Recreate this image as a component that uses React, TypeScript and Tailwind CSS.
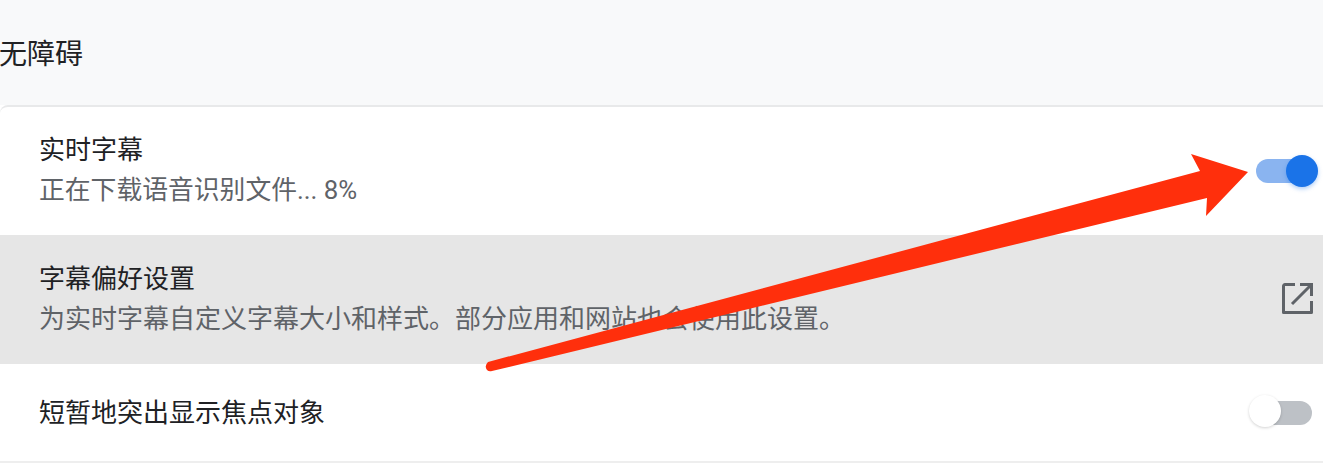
const font = "font-['Roboto','Noto_Sans_CJK_SC',sans-serif]";

function Row({ title, subtitle, subClass, className, children }: { title: string; subtitle?: string; subClass?: string; className: string; children: React.ReactNode }) {
  return (
    <div className={`flex items-center justify-between pl-[39px] ${className}`}>
      <div>
        <div className="text-[26px] leading-[38px] text-[#202124]">{title}</div>
        {subtitle && <div className={`mt-px leading-[40px] text-[#5f6368] ${subClass}`}>{subtitle}</div>}
      </div>
      {children}
    </div>
  );
}

export default function App() {
  return (
    <div className={`relative h-[474px] w-[1323px] overflow-hidden bg-white ${font}`}>
      <div className="-ml-px flex h-[105px] items-center bg-[#f8f9fa] pt-[5px] text-[28px] text-[#202124]">无障碍</div>
      <div className="rounded-tl-lg border-t-2 border-[#e8e9ea]">
        <Row title="实时字幕" subtitle="正在下载语音识别文件... 8%" subClass="text-[25.8px]" className="h-[128px] pb-[2px] pr-[5px]">
          <div className="relative mt-[2px] h-6 w-[62px]">
            <div className="absolute right-[3px] top-0 h-6 w-[59px] rounded-full bg-[#8ab4f0]" />
            <div className="absolute right-0 top-[-4px] h-8 w-8 rounded-full bg-[#1a73e8] shadow-[0_2px_4px_rgba(26,115,232,0.35)]" />
          </div>
        </Row>
        <Row title="字幕偏好设置" subtitle="为实时字幕自定义字幕大小和样式。部分应用和网站也会使用此设置。" subClass="text-[26px]" className="h-[129px] bg-[#e6e6e6] pr-[10px]">
          <svg viewBox="0 0 31 31" className="mb-[3px] h-[31px] w-[31px]" fill="none" stroke="#5f6368" strokeWidth="3">
            <path d="M13 1.5H3a1.5 1.5 0 0 0-1.5 1.5v26.5h28V18" strokeLinejoin="round" />
            <path d="M18 1.5H29.5V13M29.5 1.5L10 21" />
          </svg>
        </Row>
        <Row title="短暂地突出显示焦点对象" className="h-[99px] border-b-2 border-[#eeeeee] pr-[11px]">
          <div className="relative h-6 w-[63px]">
            <div className="absolute right-0 top-0 h-6 w-[50px] rounded-full bg-[#bdc1c6]" />
            <div className="absolute left-0 top-[-6px] h-8 w-8 rounded-full bg-white shadow-[0_1px_3px_rgba(0,0,0,0.18)]" />
          </div>
        </Row>
      </div>
      <svg viewBox="0 0 1323 474" className="pointer-events-none absolute left-0 top-0 h-[474px] w-[1323px]">
        <path
          d="M1248 172L1191 154L1200 171L488 362Q484 366 487 370Q489 372 492 371L1207 198L1206 216Z"
          fill="#ff2f0c"
        />
      </svg>
    </div>
  );
}
